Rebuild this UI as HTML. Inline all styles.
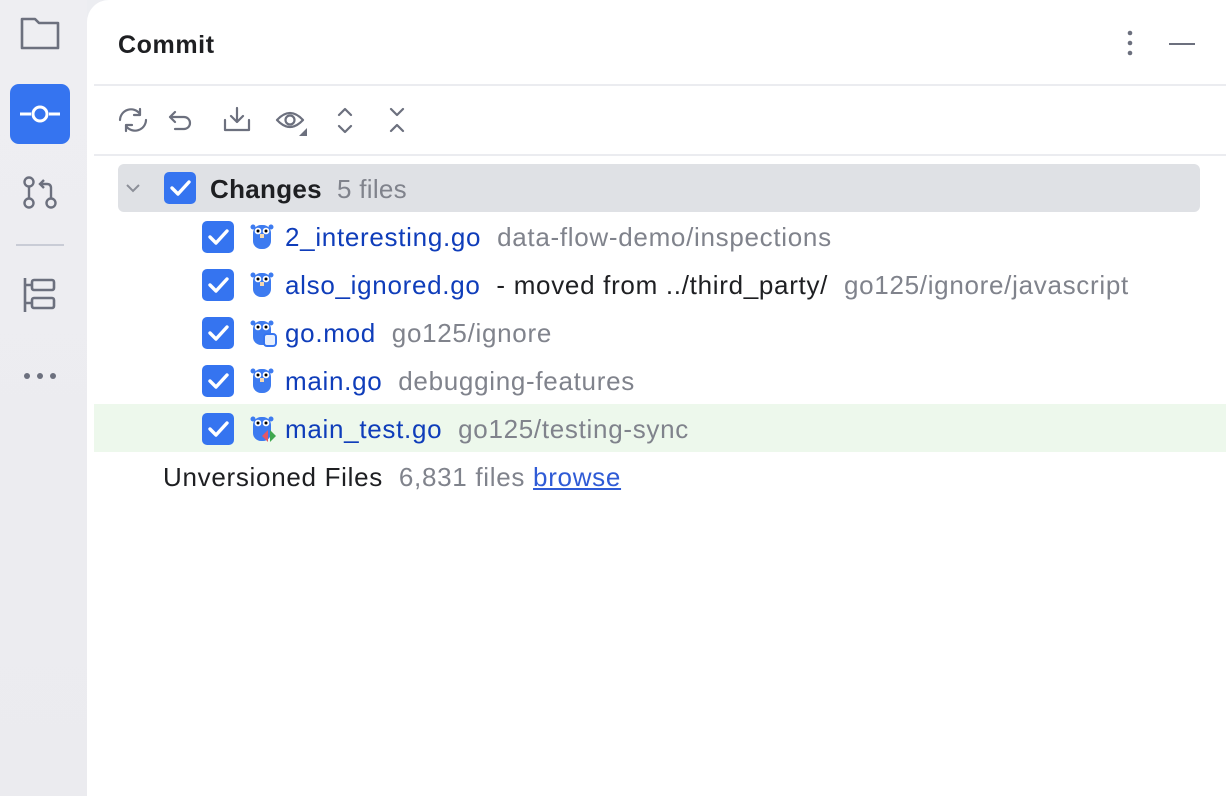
<!DOCTYPE html>
<html><head><style>
body{margin:0;width:1226px;height:796px;background:#ecedf1;font-family:"Liberation Sans",sans-serif;position:relative;overflow:hidden}
.side{position:absolute;left:0;top:0;width:87px;height:796px;background:linear-gradient(#eeeef2,#ebebef)}
.panel{position:absolute;left:87px;top:0;width:1139px;height:796px;background:#fff;border-top-left-radius:22px}
.abs{position:absolute}
.row{position:absolute;left:0;height:48px;width:1139px;font-size:26px;letter-spacing:0.7px;line-height:48px;white-space:nowrap}
.cb{position:absolute;width:32px;height:32px;background:#3574f0;border-radius:5px;top:8px}
.cb svg{position:absolute;left:0;top:0}
.blue{color:#0f3dba}.gray{color:#80838c}
.gopher{position:absolute;top:10px}
</style></head><body>
<div class="side">
<svg class="abs" style="left:18px;top:14px" width="44" height="40" viewBox="0 0 44 40"><path d="M4 5h13l4 4h19v25H4z" fill="none" stroke="#6c707e" stroke-width="2.6" stroke-linejoin="round"/></svg>
<div class="abs" style="left:10px;top:84px;width:60px;height:60px;background:#3574f0;border-radius:9px"></div>
<svg class="abs" style="left:10px;top:84px" width="60" height="60"><path d="M10 30h11M39 30h11" stroke="#fff" stroke-width="3"/><circle cx="30" cy="30" r="7" fill="none" stroke="#fff" stroke-width="3"/></svg>
<svg class="abs" style="left:20px;top:175px" width="40" height="40" fill="none" stroke="#6c707e" stroke-width="2.4"><circle cx="9" cy="7" r="4.5"/><circle cx="9" cy="28" r="4.5"/><circle cx="31" cy="28" r="4.5"/><path d="M9 12v11M31 23V13q0-4-4-4h-6M24 5l-4 4 4 4"/></svg>
<div class="abs" style="left:16px;top:244px;width:48px;height:2px;background:#c9ccd6"></div>
<svg class="abs" style="left:20px;top:275px" width="40" height="40" fill="none" stroke="#6c707e" stroke-width="2.6"><path d="M5 3v34M5 10h6M5 28h6"/><rect x="12" y="5" width="22" height="10" rx="2"/><rect x="12" y="23" width="22" height="10" rx="2"/></svg>
<svg class="abs" style="left:20px;top:366px" width="40" height="20" fill="#6c707e"><circle cx="7" cy="10" r="3"/><circle cx="20" cy="10" r="3"/><circle cx="33" cy="10" r="3"/></svg>
</div>
<div class="panel">
<div class="abs" style="left:31px;top:31px;font-size:25px;letter-spacing:0.6px;font-weight:bold;color:#1e1f22">Commit</div>
<svg class="abs" style="left:1033px;top:28px" width="20" height="32" fill="#6c707e"><circle cx="10" cy="5" r="2.3"/><circle cx="10" cy="15" r="2.3"/><circle cx="10" cy="25" r="2.3"/></svg>
<div class="abs" style="left:1082px;top:43px;width:26px;height:2px;background:#6c707e"></div>
<div class="abs" style="left:7px;top:84px;width:1132px;height:2px;background:#ebecf0"></div>
<svg class="abs" style="left:28px;top:102px" width="320" height="36" fill="none" stroke="#6c707e" stroke-width="2.2" stroke-linecap="round" stroke-linejoin="round">
<path d="M5 18a11 11 0 0 1 20-6M31 18a11 11 0 0 1-20 6M25 7v6h-6M11 29v-6h6"/>
<path d="M60 10l-5 5 5 5M55 15h14a6 6 0 0 1 0 12h-9"/>
<path d="M122 6v14M116 14l6 6 6-6M110 18v10h24V18"/>
<path d="M162 18q13-14 26 0q-13 14-26 0z"/><circle cx="175" cy="18" r="4.5"/>
<path d="M224 13l6-6 6 6M224 24l6 6 6-6"/>
<path d="M276 7l6 6 6-6M276 29l6-6 6 6"/>
</svg>
<svg class="abs" style="left:211px;top:127px" width="10" height="10"><path d="M9 1v8H1z" fill="#6c707e"/></svg>
<div class="abs" style="left:7px;top:154px;width:1132px;height:2px;background:#ebecf0"></div>
<div class="abs" style="left:31px;top:164px;width:1082px;height:48px;background:#dfe1e5;border-radius:6px"></div>
<div class="abs" style="left:7px;top:404px;width:1132px;height:48px;background:#edf8ec"></div>
<svg class="abs" style="left:38px;top:181px" width="16" height="14"><path d="M2 4l6 6 6-6" fill="none" stroke="#8c8f98" stroke-width="2"/></svg>
<div class="row" style="top:165px"><div class="cb" style="left:77px;top:7px"><svg width="32" height="32"><path d="M8 16l6 6 11-12" fill="none" stroke="#fff" stroke-width="3.4" stroke-linecap="round" stroke-linejoin="round"/></svg></div><span class="abs" style="left:123px;letter-spacing:0.3px"><b style="color:#1e1f22">Changes</b> <span class="gray">&nbsp;5 files</span></span></div>

<div class="row" style="top:213px"><div class="cb" style="left:115px"><svg width="32" height="32"><path d="M8 16l6 6 11-12" fill="none" stroke="#fff" stroke-width="3.4" stroke-linecap="round" stroke-linejoin="round"/></svg></div>
<svg class="gopher" style="left:162px" width="26" height="28"><circle cx="4" cy="4" r="2.5" fill="#3d7bf0"/><circle cx="22" cy="4" r="2.5" fill="#3d7bf0"/><rect x="4" y="2" width="18" height="24" rx="8" fill="#3d7bf0"/><circle cx="9" cy="8" r="3.3" fill="#fff"/><circle cx="17" cy="8" r="3.3" fill="#fff"/><circle cx="9" cy="8" r="1.5" fill="#000"/><circle cx="17" cy="8" r="1.5" fill="#000"/><rect x="11" y="11" width="4" height="4" fill="#f5d9b0"/></svg>
<span class="abs" style="left:198px"><span class="blue">2_interesting.go</span> <span class="gray">&nbsp;data-flow-demo/inspections</span></span></div>

<div class="row" style="top:261px"><div class="cb" style="left:115px"><svg width="32" height="32"><path d="M8 16l6 6 11-12" fill="none" stroke="#fff" stroke-width="3.4" stroke-linecap="round" stroke-linejoin="round"/></svg></div>
<svg class="gopher" style="left:162px" width="26" height="28"><circle cx="4" cy="4" r="2.5" fill="#3d7bf0"/><circle cx="22" cy="4" r="2.5" fill="#3d7bf0"/><rect x="4" y="2" width="18" height="24" rx="8" fill="#3d7bf0"/><circle cx="9" cy="8" r="3.3" fill="#fff"/><circle cx="17" cy="8" r="3.3" fill="#fff"/><circle cx="9" cy="8" r="1.5" fill="#000"/><circle cx="17" cy="8" r="1.5" fill="#000"/><rect x="11" y="11" width="4" height="4" fill="#f5d9b0"/></svg>
<span class="abs" style="left:198px"><span class="blue">also_ignored.go</span> <span style="color:#1e1f22">&nbsp;- moved from ../third_party/</span> <span class="gray">&nbsp;go125/ignore/javascript</span></span></div>

<div class="row" style="top:309px"><div class="cb" style="left:115px"><svg width="32" height="32"><path d="M8 16l6 6 11-12" fill="none" stroke="#fff" stroke-width="3.4" stroke-linecap="round" stroke-linejoin="round"/></svg></div>
<svg class="gopher" style="left:162px" width="30" height="28"><circle cx="4" cy="4" r="2.5" fill="#3d7bf0"/><circle cx="22" cy="4" r="2.5" fill="#3d7bf0"/><rect x="4" y="2" width="18" height="24" rx="8" fill="#3d7bf0"/><circle cx="9" cy="8" r="3.3" fill="#fff"/><circle cx="17" cy="8" r="3.3" fill="#fff"/><circle cx="9" cy="8" r="1.5" fill="#000"/><circle cx="17" cy="8" r="1.5" fill="#000"/><rect x="15" y="15" width="12" height="12" rx="3" fill="#e7effd" stroke="#3574f0" stroke-width="2"/></svg>
<span class="abs" style="left:198px"><span class="blue">go.mod</span> <span class="gray">&nbsp;go125/ignore</span></span></div>

<div class="row" style="top:357px"><div class="cb" style="left:115px"><svg width="32" height="32"><path d="M8 16l6 6 11-12" fill="none" stroke="#fff" stroke-width="3.4" stroke-linecap="round" stroke-linejoin="round"/></svg></div>
<svg class="gopher" style="left:162px" width="26" height="28"><circle cx="4" cy="4" r="2.5" fill="#3d7bf0"/><circle cx="22" cy="4" r="2.5" fill="#3d7bf0"/><rect x="4" y="2" width="18" height="24" rx="8" fill="#3d7bf0"/><circle cx="9" cy="8" r="3.3" fill="#fff"/><circle cx="17" cy="8" r="3.3" fill="#fff"/><circle cx="9" cy="8" r="1.5" fill="#000"/><circle cx="17" cy="8" r="1.5" fill="#000"/><rect x="11" y="11" width="4" height="4" fill="#f5d9b0"/></svg>
<span class="abs" style="left:198px"><span class="blue">main.go</span> <span class="gray">&nbsp;debugging-features</span></span></div>

<div class="row" style="top:405px"><div class="cb" style="left:115px"><svg width="32" height="32"><path d="M8 16l6 6 11-12" fill="none" stroke="#fff" stroke-width="3.4" stroke-linecap="round" stroke-linejoin="round"/></svg></div>
<svg class="gopher" style="left:162px" width="30" height="28"><circle cx="4" cy="4" r="2.5" fill="#3d7bf0"/><circle cx="22" cy="4" r="2.5" fill="#3d7bf0"/><rect x="4" y="2" width="18" height="24" rx="8" fill="#3d7bf0"/><circle cx="9" cy="8" r="3.3" fill="#fff"/><circle cx="17" cy="8" r="3.3" fill="#fff"/><circle cx="9" cy="8" r="1.5" fill="#000"/><circle cx="17" cy="8" r="1.5" fill="#000"/><path d="M19 15l-6 6 6 6z" fill="#e55765"/><path d="M21 15l6 6-6 6z" fill="#3fa84e"/></svg>
<span class="abs" style="left:198px"><span class="blue">main_test.go</span> <span class="gray">&nbsp;go125/testing-sync</span></span></div>

<div class="row" style="top:453px"><span class="abs" style="left:76px"><span style="color:#1e1f22">Unversioned Files</span> <span class="gray">&nbsp;6,831 files</span> <span style="color:#2f5bd6;text-decoration:underline">browse</span></span></div>
</div>
</body></html>
